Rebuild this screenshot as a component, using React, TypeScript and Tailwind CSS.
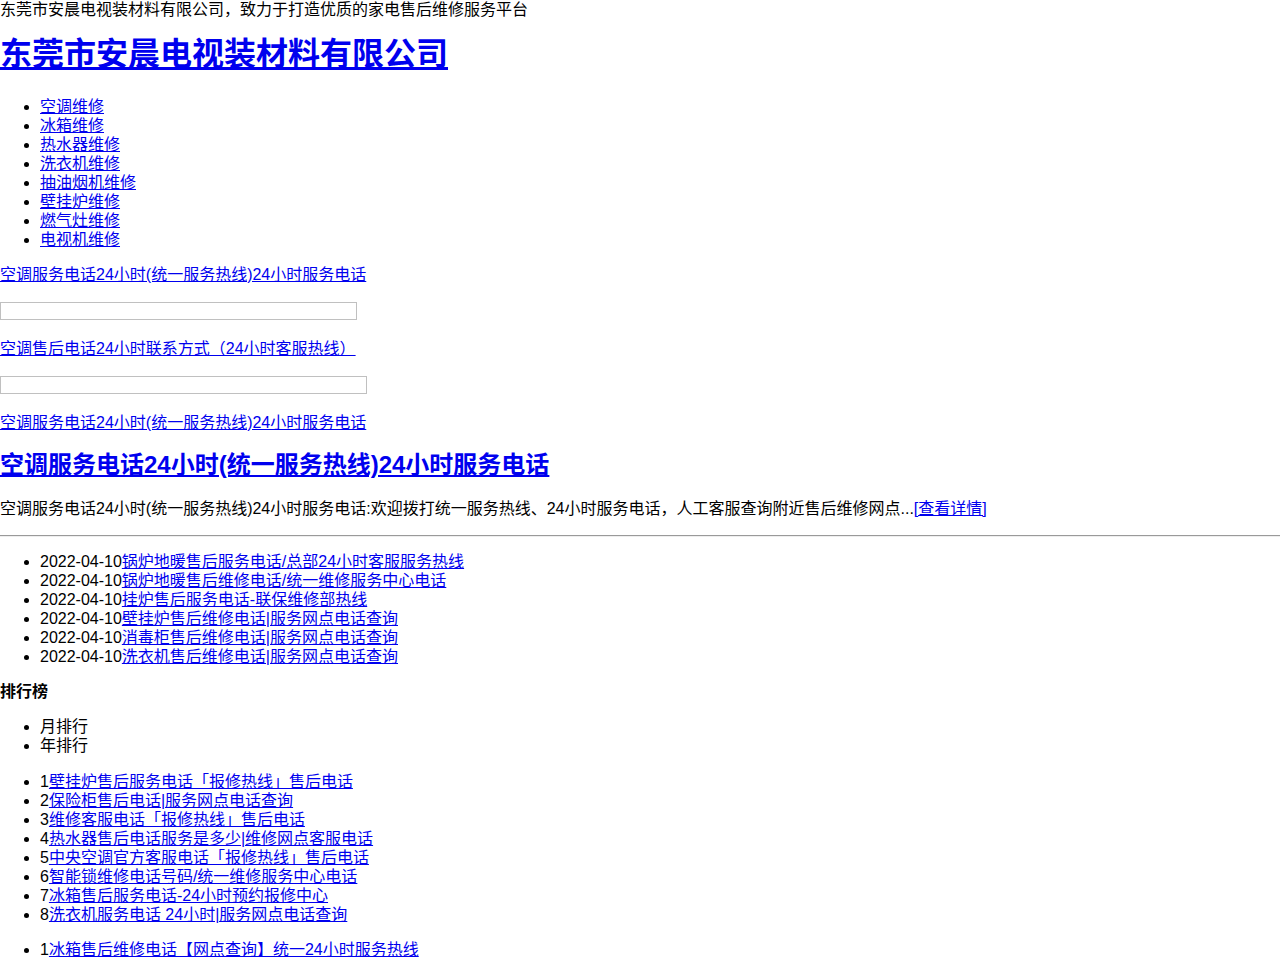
const nav = ["空调维修", "冰箱维修", "热水器维修", "洗衣机维修", "抽油烟机维修", "壁挂炉维修", "燃气灶维修", "电视机维修"];

const news = [
  "锅炉地暖售后服务电话/总部24小时客服服务热线",
  "锅炉地暖售后维修电话/统一维修服务中心电话",
  "挂炉售后服务电话-联保维修部热线",
  "壁挂炉售后维修电话|服务网点电话查询",
  "消毒柜售后维修电话|服务网点电话查询",
  "洗衣机售后维修电话|服务网点电话查询",
];

const ranking = [
  "壁挂炉售后服务电话「报修热线」售后电话",
  "保险柜售后电话|服务网点电话查询",
  "维修客服电话「报修热线」售后电话",
  "热水器售后电话服务是多少|维修网点客服电话",
  "中央空调官方客服电话「报修热线」售后电话",
  "智能锁维修电话号码/统一维修服务中心电话",
  "冰箱售后服务电话-24小时预约报修中心",
  "洗衣机服务电话 24小时|服务网点电话查询",
];

const link = "text-[#0000ee] underline";

export default function App() {
  return (
    <div className="min-h-screen bg-white text-black text-[16px] leading-[19px] font-['Liberation_Sans','Noto_Sans_CJK_SC',sans-serif]">
      <div>东莞市安晨电视装材料有限公司，致力于打造优质的家电售后维修服务平台</div>

      <h1 className="mt-[16px] text-[32px] leading-[38px] font-bold">
        <a href="#" className={link}>东莞市安晨电视装材料有限公司</a>
      </h1>

      <ul className="mt-[24px] list-disc pl-10">
        {nav.map((n) => (
          <li key={n}>
            <a href="#" className={link}>{n}</a>
          </li>
        ))}
      </ul>

      <p className="mt-[16px]">
        <a href="#" className={link}>空调服务电话24小时(统一服务热线)24小时服务电话</a>
      </p>
      <div className="mt-[18px] h-[18px] w-[357px] border border-[#c0c0c0]" />
      <p className="mt-[19px]">
        <a href="#" className={link}>空调售后电话24小时联系方式（24小时客服热线）</a>
      </p>
      <div className="mt-[18px] h-[18px] w-[367px] border border-[#c0c0c0]" />
      <p className="mt-[19px]">
        <a href="#" className={link}>空调服务电话24小时(统一服务热线)24小时服务电话</a>
      </p>

      <h2 className="mt-[19px] text-[24px] leading-[28px] font-bold">
        <a href="#" className={link}>空调服务电话24小时(统一服务热线)24小时服务电话</a>
      </h2>
      <p className="mt-[20px]">
        空调服务电话24小时(统一服务热线)24小时服务电话:欢迎拨打统一服务热线、24小时服务电话，人工客服查询附近售后维修网点...
        <a href="#" className={link}>[查看详情]</a>
      </p>

      <div className="mt-[17px] border-t border-t-[#9a9a9a] border-b border-b-[#eeeeee]" />

      <ul className="mt-[15px] list-disc pl-10">
        {news.map((n) => (
          <li key={n}>
            2022-04-10<a href="#" className={link}>{n}</a>
          </li>
        ))}
      </ul>

      <h3 className="mt-[16px] font-bold">排行榜</h3>
      <ul className="mt-[16px] list-disc pl-10">
        <li>月排行</li>
        <li>年排行</li>
      </ul>

      <ul className="mt-[17px] list-disc pl-10">
        {ranking.map((n, i) => (
          <li key={n}>
            {i + 1}
            <a href="#" className={link}>{n}</a>
          </li>
        ))}
      </ul>

      <ul className="mt-[16px] list-disc pl-10">
        <li>
          1<a href="#" className={link}>冰箱售后维修电话【网点查询】统一24小时服务热线</a>
        </li>
      </ul>
    </div>
  );
}
